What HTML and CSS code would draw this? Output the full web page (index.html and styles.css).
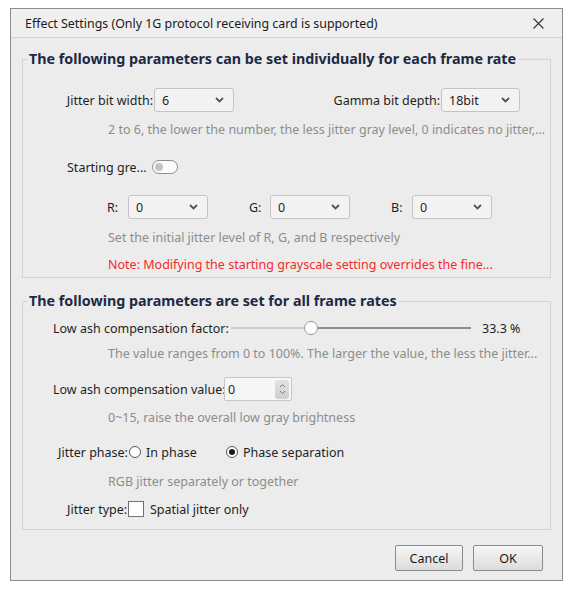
FILE: index.html
```html
<!DOCTYPE html>
<html lang="en">
<head>
<meta charset="utf-8">
<title>Effect Settings</title>
<link rel="stylesheet" href="styles.css">
</head>
<body>
<div class="dialog">
  <div class="titlebar">
    <span class="title">Effect Settings (Only 1G protocol receiving card is supported)</span>
    <svg class="close" width="11" height="11" viewBox="0 0 11 11"><path d="M0.5 0.5L10.5 10.5M10.5 0.5L0.5 10.5" stroke="#333" stroke-width="1.1" fill="none"/></svg>
  </div>

  <div class="content">
    <fieldset class="group g1">
      <legend>The following parameters can be set individually for each frame rate</legend>

      <div class="row r-bits">
        <span class="lbl lbl-jitter">Jitter bit width:</span>
        <div class="combo c-jitter"><span>6</span><svg class="chev" width="9" height="6" viewBox="0 0 9 6"><path d="M1 1L4.5 4.5L8 1" stroke="#4a556c" stroke-width="1.8" fill="none"/></svg></div>
        <span class="lbl lbl-gamma">Gamma bit depth:</span>
        <div class="combo c-gamma"><span>18bit</span><svg class="chev" width="9" height="6" viewBox="0 0 9 6"><path d="M1 1L4.5 4.5L8 1" stroke="#4a556c" stroke-width="1.8" fill="none"/></svg></div>
      </div>
      <p class="hint h-bits">2 to 6, the lower the number, the less jitter gray level, 0 indicates no jitter,...</p>

      <div class="row r-toggle">
        <span class="lbl lbl-start">Starting gre...</span>
        <span class="toggle"><span class="knob"></span></span>
      </div>

      <div class="row r-rgb">
        <span class="lbl lbl-ch">R:</span>
        <div class="combo c-ch"><span>0</span><svg class="chev" width="9" height="6" viewBox="0 0 9 6"><path d="M1 1L4.5 4.5L8 1" stroke="#4a556c" stroke-width="1.8" fill="none"/></svg></div>
        <span class="lbl lbl-ch">G:</span>
        <div class="combo c-ch"><span>0</span><svg class="chev" width="9" height="6" viewBox="0 0 9 6"><path d="M1 1L4.5 4.5L8 1" stroke="#4a556c" stroke-width="1.8" fill="none"/></svg></div>
        <span class="lbl lbl-ch">B:</span>
        <div class="combo c-ch"><span>0</span><svg class="chev" width="9" height="6" viewBox="0 0 9 6"><path d="M1 1L4.5 4.5L8 1" stroke="#4a556c" stroke-width="1.8" fill="none"/></svg></div>
      </div>
      <p class="hint h-rgb">Set the initial jitter level of R, G, and B respectively</p>
      <p class="note">Note: Modifying the starting grayscale setting overrides the fine...</p>
    </fieldset>

    <fieldset class="group g2">
      <legend>The following parameters are set for all frame rates</legend>

      <div class="row r-slider">
        <span class="lbl lbl-factor">Low ash compensation factor:</span>
        <div class="slider">
          <span class="track-done" style="width:73px"></span>
          <span class="thumb"></span>
          <span class="track-rest"></span>
        </div>
        <span class="value">33.3 %</span>
      </div>
      <p class="hint h-factor">The value ranges from 0 to 100%. The larger the value, the less the jitter...</p>

      <div class="row r-spin">
        <span class="lbl lbl-value">Low ash compensation value:</span>
        <div class="spin">
          <span class="spin-text">0</span>
          <span class="spin-btn">
            <svg width="7" height="14" viewBox="0 0 7 14"><path d="M1 5L3.5 2.5L6 5M1 9L3.5 11.5L6 9" stroke="#7a7a7a" stroke-width="1" fill="none"/></svg>
          </span>
        </div>
      </div>
      <p class="hint h-value">0~15, raise the overall low gray brightness</p>

      <div class="row r-phase">
        <span class="lbl lbl-phase">Jitter phase:</span>
        <span class="radio-item ri-first"><span class="radio"></span><span>In phase</span></span>
        <span class="radio-item"><span class="radio checked"></span><span>Phase separation</span></span>
      </div>
      <p class="hint h-phase">RGB jitter separately or together</p>

      <div class="row r-type">
        <span class="lbl lbl-type">Jitter type:</span>
        <span class="check"></span>
        <span class="check-text">Spatial jitter only</span>
      </div>
    </fieldset>
  </div>

  <div class="footer">
    <button class="btn btn-cancel">Cancel</button>
    <button class="btn btn-ok">OK</button>
  </div>
</div>
</body>
</html>
```

FILE: styles.css
```css
html, body {
  margin: 0;
  background: #ffffff;
}

body {
  font-family: "Noto Sans", "Open Sans", "Liberation Sans", sans-serif;
  font-size: 12.5px;
  color: #1f1f1f;
}

p {
  margin: 0;
}

/* window frame */
.dialog {
  margin: 8px 0 0 10px;
  width: 551px;
  height: 571px;
  border: 1px solid #8c8c8c;
  background: #ececec;
  display: flex;
  flex-direction: column;
}

.titlebar {
  height: 28px;
  background: #efefef;
  border-bottom: 1px solid #d4d4d4;
  display: flex;
  align-items: center;
  justify-content: space-between;
  padding: 0 18px 0 14px;
  flex: none;
}

.title {
  font-size: 12.4px;
  color: #1a1a1a;
}

.close {
  display: block;
}

.content {
  padding: 0 11px;
}

/* group boxes */
.group {
  margin: 0;
  padding: 0;
  border: 1px solid #d3d3d3;
  min-width: 0;
}

.group legend {
  margin-left: 4px;
  padding: 0 2px;
  font-size: 14.3px;
  font-weight: 700;
  line-height: 20px;
  color: #1c2a44;
}

.g1 {
  margin-top: 11px;
  padding-bottom: 3px;
}

.g2 {
  margin-top: 13px;
  padding-bottom: 10px;
}

.row {
  display: flex;
  align-items: center;
}

.lbl {
  flex: none;
  white-space: nowrap;
}

.hint {
  padding-left: 85px;
  line-height: 18px;
  color: #8d8d8d;
  white-space: nowrap;
}

.note {
  padding-left: 85px;
  line-height: 18px;
  color: #f52a2a;
  margin-top: 9px;
  white-space: nowrap;
}

/* drop-down boxes */
.combo {
  flex: none;
  box-sizing: border-box;
  height: 24px;
  background: #f3f3f3;
  border: 1px solid #c4c4c4;
  border-radius: 3px;
  display: flex;
  align-items: center;
  justify-content: space-between;
  padding: 0 9px 0 7px;
}

.chev {
  display: block;
}

/* first group rows */
.r-bits {
  height: 24px;
  margin-top: 19px;
}

.lbl-jitter {
  width: 130px;
  text-align: right;
}

.c-jitter {
  width: 80px;
  margin-left: 1px;
}

.lbl-gamma {
  width: 206px;
  text-align: right;
}

.c-gamma {
  width: 79px;
  margin-left: 1px;
}

.h-bits {
  margin-top: 9px;
}

.r-toggle {
  height: 20px;
  margin-top: 18px;
}

.lbl-start {
  width: 85px;
  padding-left: 44px;
}

.toggle {
  box-sizing: border-box;
  width: 26px;
  height: 14px;
  border: 1px solid #8f8f8f;
  border-radius: 7px;
  background: #fbfbfb;
  display: flex;
  align-items: center;
  padding-left: 2px;
}

.knob {
  width: 8px;
  height: 8px;
  border-radius: 50%;
  background: #c4c4c4;
}

.r-rgb {
  height: 24px;
  margin-top: 18px;
  padding-left: 84px;
}

.lbl-ch {
  width: 21px;
}

.c-ch {
  width: 80px;
  margin-right: 41px;
}

.h-rgb {
  margin-top: 10px;
}

/* second group rows */
.r-slider {
  height: 20px;
  margin-top: 7px;
  padding-left: 30px;
}

.lbl-factor {
  width: 178px;
}

.slider {
  width: 240px;
  height: 14px;
  display: flex;
  align-items: center;
  flex: none;
}

.track-done {
  height: 2px;
  background: #cdcdcd;
  flex: none;
}

.thumb {
  box-sizing: border-box;
  width: 14px;
  height: 14px;
  border-radius: 50%;
  border: 1px solid #9a9a9a;
  background: #ffffff;
  flex: none;
}

.track-rest {
  flex: 1;
  height: 2px;
  background: #8e8e8e;
}

.value {
  margin-left: 11px;
  white-space: nowrap;
}

.h-factor {
  margin-top: 7px;
}

.r-spin {
  height: 24px;
  margin-top: 14px;
  padding-left: 30px;
}

.lbl-value {
  width: 171px;
}

.spin {
  box-sizing: border-box;
  width: 68px;
  height: 24px;
  background: #f6f6f6;
  border: 1px solid #c6c6c6;
  border-radius: 2px;
  display: flex;
  align-items: center;
  justify-content: space-between;
  padding: 0 2px 0 3px;
}

.spin-btn {
  width: 14px;
  height: 19px;
  border-radius: 3px;
  background: linear-gradient(#e2e2e2, #cfcfcf);
  display: flex;
  align-items: center;
  justify-content: center;
}

.spin-btn svg {
  display: block;
}

.h-value {
  margin-top: 8px;
}

.r-phase {
  height: 20px;
  margin-top: 15px;
  padding-left: 35px;
}

.lbl-phase {
  width: 71px;
}

.radio-item {
  display: flex;
  align-items: center;
  gap: 5px;
  white-space: nowrap;
}

.ri-first {
  width: 97px;
}

.radio {
  box-sizing: border-box;
  width: 12px;
  height: 12px;
  border-radius: 50%;
  border: 1px solid #555;
  background: #fff;
  display: flex;
  align-items: center;
  justify-content: center;
  flex: none;
}

.radio.checked::after {
  content: "";
  width: 6px;
  height: 6px;
  border-radius: 50%;
  background: #1a1a1a;
}

.h-phase {
  margin-top: 11px;
}

.r-type {
  height: 20px;
  margin-top: 8px;
  padding-left: 44px;
}

.lbl-type {
  width: 61px;
}

.check {
  box-sizing: border-box;
  width: 16px;
  height: 16px;
  border: 1px solid #707070;
  background: #fff;
  flex: none;
}

.check-text {
  margin-left: 6px;
  white-space: nowrap;
}

/* footer buttons */
.footer {
  display: flex;
  justify-content: flex-end;
  gap: 10px;
  padding: 15px 19px 0 0;
}

.btn {
  height: 26px;
  font-family: inherit;
  font-size: 12.5px;
  color: #1a1a1a;
  border: 1px solid #8a8a8a;
  border-radius: 2px;
  background: linear-gradient(#f6f6f6, #dcdcdc);
  padding: 0;
}

.btn-cancel {
  width: 68px;
}

.btn-ok {
  width: 70px;
}
```
